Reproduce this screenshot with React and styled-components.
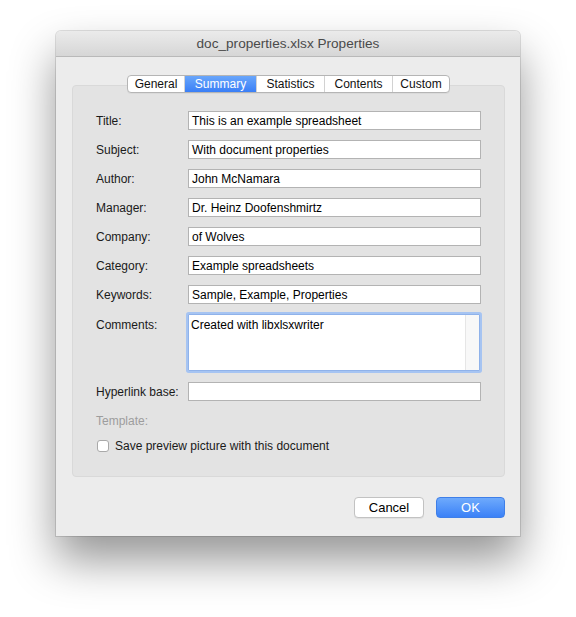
import React from 'react'
import styled, { createGlobalStyle } from 'styled-components'

const GlobalStyle = createGlobalStyle`
  html, body {
    margin: 0;
    padding: 0;
    background: #ffffff;
  }
  body {
    font-family: 'Liberation Sans', Arial, sans-serif;
    font-size: 12px;
    color: #000;
  }
`

const Page = styled.div`
  width: 576px;
  height: 617px;
  padding: 31px 0 0 56px;
  box-sizing: border-box;
`

const Window = styled.div`
  width: 464px;
  height: 505px;
  display: flex;
  flex-direction: column;
  background: #ececec;
  border-radius: 5px 5px 0 0;
  box-shadow: 0 0 0 1px rgba(0, 0, 0, 0.12), 0 24px 45px rgba(0, 0, 0, 0.42);
  overflow: hidden;
`

const TitleBar = styled.div`
  height: 25px;
  display: flex;
  align-items: center;
  justify-content: center;
  background: linear-gradient(#ebebeb, #d6d6d6);
  border-bottom: 1px solid #b9b9b9;
  font-size: 13.6px;
  color: #4a4a4a;
`

const Body = styled.div`
  flex: 1;
  display: flex;
  flex-direction: column;
  padding: 18px 15px 18px 16px;
`

const Tabs = styled.div`
  align-self: center;
  display: flex;
  height: 16px;
  background: #fff;
  border: 1px solid #b5b5b5;
  border-radius: 4px;
  overflow: hidden;
  position: relative;
  z-index: 1;
  box-shadow: 0 1px 0 rgba(0, 0, 0, 0.04);
`

const Tab = styled.div`
  width: ${({ w }) => w}px;
  display: flex;
  align-items: center;
  justify-content: center;
  font-size: 12px;
  color: ${({ active }) => (active ? '#fff' : '#111')};
  background: ${({ active }) =>
    active ? 'linear-gradient(#69a6fb, #3a7ff6)' : 'transparent'};
  border-left: ${({ first }) => (first ? 'none' : '1px solid #d2d2d2')};
`

const Group = styled.div`
  margin-top: -8px;
  height: 392px;
  box-sizing: border-box;
  background: #e3e3e3;
  border: 1px solid #d9d9d9;
  border-radius: 4px;
  padding: 25px 23px 0 23px;
  display: flex;
  flex-direction: column;
`

const Row = styled.div`
  display: flex;
  align-items: ${({ top }) => (top ? 'flex-start' : 'center')};
  margin-bottom: ${({ gap }) => (gap === undefined ? 10 : gap)}px;
`

const Label = styled.div`
  width: 92px;
  flex: none;
  color: ${({ dim }) => (dim ? '#9d9d9d' : '#1a1a1a')};
  padding-top: ${({ top }) => (top ? 4 : 0)}px;
`

const Field = styled.div`
  flex: 1;
  height: 19px;
  box-sizing: border-box;
  background: #fff;
  border: 1px solid #b3b3b3;
  padding: 0 3px;
  display: flex;
  align-items: center;
  color: #000;
  white-space: nowrap;
`

const TextArea = styled.div`
  flex: 1;
  height: 57px;
  box-sizing: border-box;
  background: #fff;
  border: 1px solid #8fb2ea;
  box-shadow: 0 0 0 2px #a6c4f2;
  border-radius: 1px;
  display: flex;
  margin-right: 1px;
`

const TextContent = styled.div`
  flex: 1;
  padding: 3px 2px;
`

const ScrollTrack = styled.div`
  width: 13px;
  background: #f8f8f8;
  border-left: 1px solid #e6e6e6;
`

const CheckRow = styled.label`
  display: flex;
  align-items: center;
  gap: 6px;
  margin-left: 1px;
  color: #1a1a1a;
`

const Check = styled.span`
  width: 12px;
  height: 12px;
  box-sizing: border-box;
  border: 1px solid #a9a9a9;
  border-radius: 3px;
  background: #fff;
`

const Footer = styled.div`
  margin-top: 20px;
  display: flex;
  justify-content: flex-end;
  gap: 12px;
`

const Button = styled.div`
  width: ${({ w }) => w}px;
  height: 21px;
  box-sizing: border-box;
  display: flex;
  align-items: center;
  justify-content: center;
  border-radius: 4px;
  font-size: 13px;
  ${({ primary }) =>
    primary
      ? `
    background: linear-gradient(#6eaafc, #3b81f7);
    border: 1px solid #3f7fe8;
    color: #fff;
  `
      : `
    background: #fff;
    border: 1px solid #c2c2c2;
    color: #000;
    box-shadow: 0 1px 0 rgba(0,0,0,0.05);
  `}
`

const tabs = [
  { name: 'General', w: 56 },
  { name: 'Summary', w: 71 },
  { name: 'Statistics', w: 67 },
  { name: 'Contents', w: 67 },
  { name: 'Custom', w: 56 }
]

const fields = [
  ['Title:', 'This is an example spreadsheet'],
  ['Subject:', 'With document properties'],
  ['Author:', 'John McNamara'],
  ['Manager:', 'Dr. Heinz Doofenshmirtz'],
  ['Company:', 'of Wolves'],
  ['Category:', 'Example spreadsheets'],
  ['Keywords:', 'Sample, Example, Properties']
]

export default function App() {
  return (
    <>
      <GlobalStyle />
      <Page>
        <Window>
          <TitleBar>doc_properties.xlsx Properties</TitleBar>
          <Body>
            <Tabs>
              {tabs.map((t, i) => (
                <Tab key={t.name} w={t.w} first={i === 0} active={t.name === 'Summary'}>
                  {t.name}
                </Tab>
              ))}
            </Tabs>
            <Group>
              {fields.map(([label, value]) => (
                <Row key={label}>
                  <Label>{label}</Label>
                  <Field>{value}</Field>
                </Row>
              ))}
              <Row top gap={11}>
                <Label top>Comments:</Label>
                <TextArea>
                  <TextContent>Created with libxlsxwriter</TextContent>
                  <ScrollTrack />
                </TextArea>
              </Row>
              <Row gap={13}>
                <Label>Hyperlink base:</Label>
                <Field />
              </Row>
              <Row gap={11}>
                <Label dim>Template:</Label>
              </Row>
              <CheckRow>
                <Check />
                Save preview picture with this document
              </CheckRow>
            </Group>
            <Footer>
              <Button w={70}>Cancel</Button>
              <Button w={69} primary>
                OK
              </Button>
            </Footer>
          </Body>
        </Window>
      </Page>
    </>
  )
}
